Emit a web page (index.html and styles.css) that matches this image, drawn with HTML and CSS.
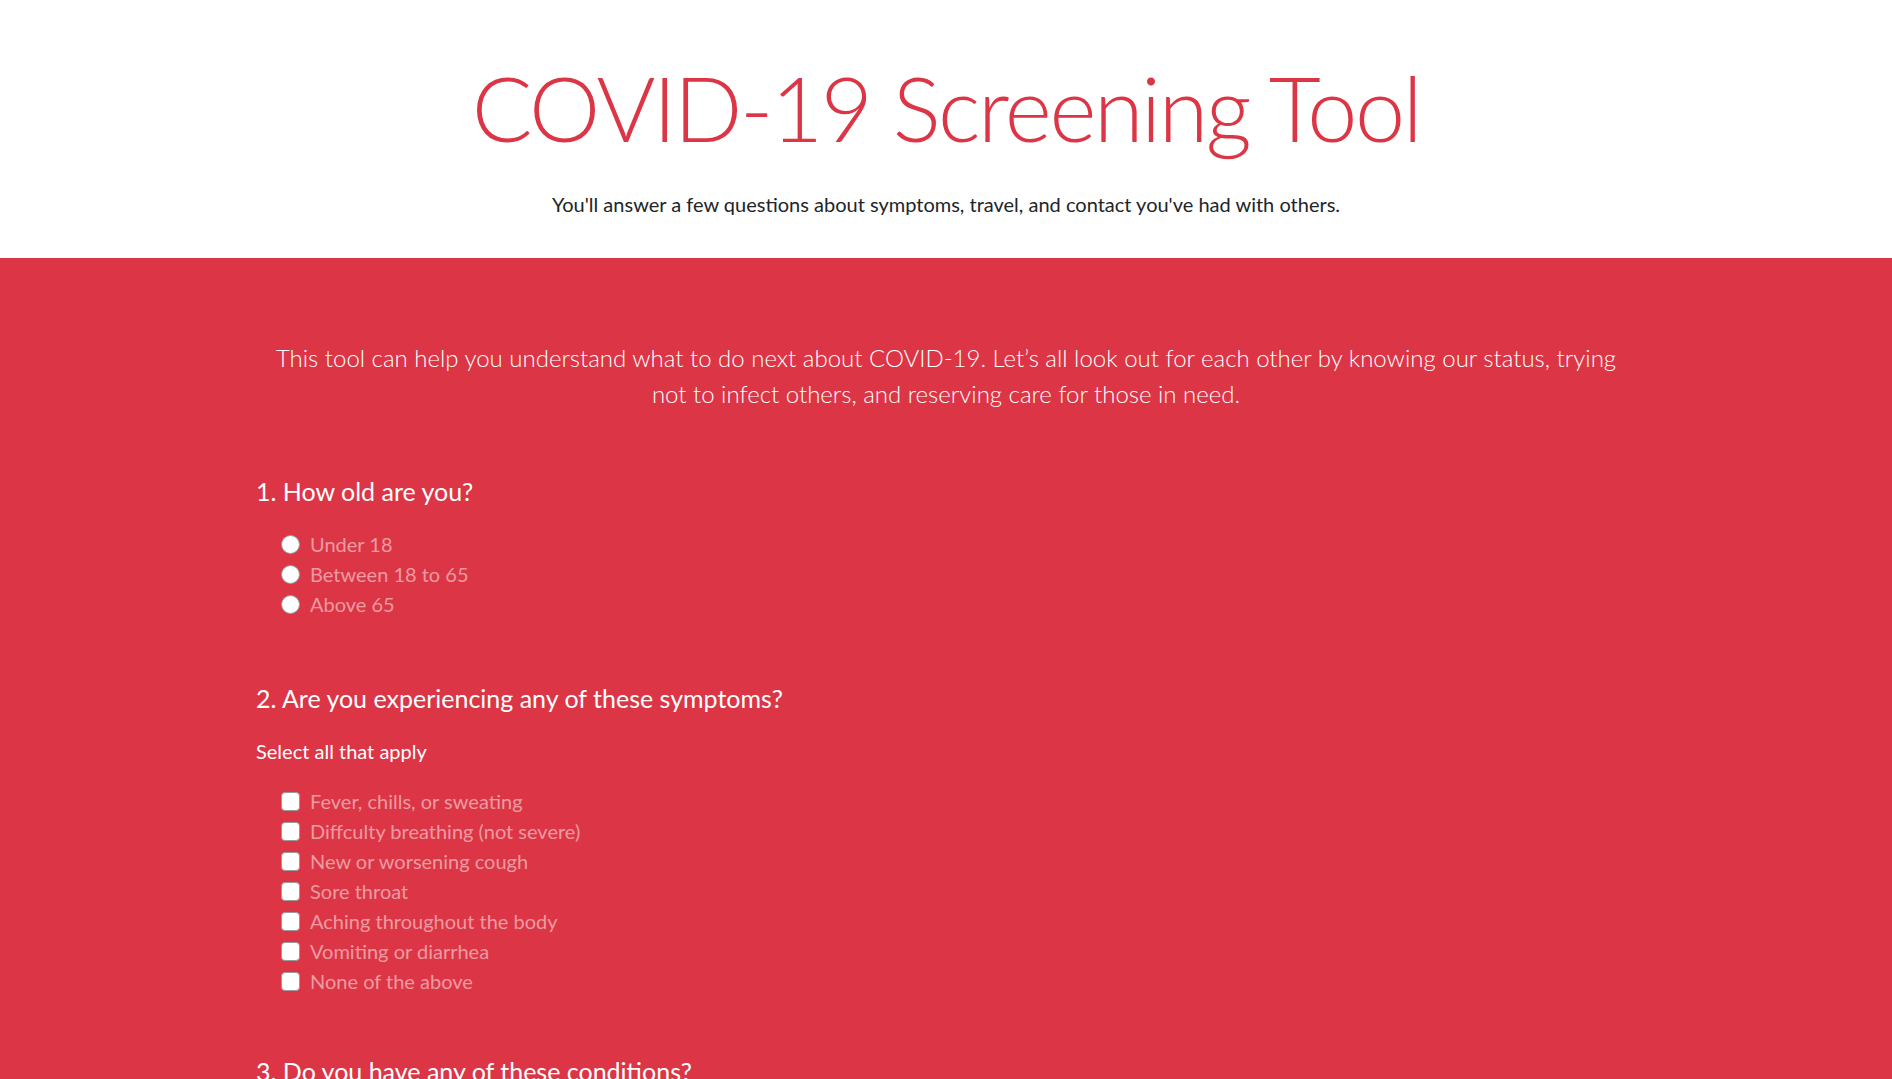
FILE: index.html
```html
<!DOCTYPE html>
<html lang="en">
<head>
<meta charset="utf-8">
<title>COVID-19 Screening Tool</title>
<link rel="stylesheet" href="styles.css">
</head>
<body>
<header class="hero">
  <h1 class="hero-title">COVID-19 Screening Tool</h1>
  <p class="hero-sub">You'll answer a few questions about symptoms, travel, and contact you've had with others.</p>
</header>
<main class="screen">
  <div class="container">
    <p class="intro">This tool can help you understand what to do next about COVID-19. Let’s all look out for each other by knowing our status, trying not to infect others, and reserving care for those in need.</p>

    <section class="question q1">
      <h2 class="q-title">1. How old are you?</h2>
      <div class="options">
        <label class="opt"><input type="radio" name="age" class="radio"><span>Under 18</span></label>
        <label class="opt"><input type="radio" name="age" class="radio"><span>Between 18 to 65</span></label>
        <label class="opt"><input type="radio" name="age" class="radio"><span>Above 65</span></label>
      </div>
    </section>

    <section class="question q2">
      <h2 class="q-title">2. Are you experiencing any of these symptoms?</h2>
      <p class="hint">Select all that apply</p>
      <div class="options">
        <label class="opt"><input type="checkbox" class="check"><span>Fever, chills, or sweating</span></label>
        <label class="opt"><input type="checkbox" class="check"><span>Diffculty breathing (not severe)</span></label>
        <label class="opt"><input type="checkbox" class="check"><span>New or worsening cough</span></label>
        <label class="opt"><input type="checkbox" class="check"><span>Sore throat</span></label>
        <label class="opt"><input type="checkbox" class="check"><span>Aching throughout the body</span></label>
        <label class="opt"><input type="checkbox" class="check"><span>Vomiting or diarrhea</span></label>
        <label class="opt"><input type="checkbox" class="check"><span>None of the above</span></label>
      </div>
    </section>

    <section class="question q3">
      <h2 class="q-title">3. Do you have any of these conditions?</h2>
    </section>
  </div>
</main>
</body>
</html>
```
FILE: styles.css
```css
html, body {
  margin: 0;
  padding: 0;
}
body {
  font-family: Lato, "Open Sans", "Liberation Sans", sans-serif;
  color: #212529;
  background: #dc3545;
  overflow: hidden;
}
.hero {
  background: #ffffff;
  height: 258px;
  box-sizing: border-box;
  padding-top: 53px;
  display: flex;
  flex-direction: column;
  align-items: center;
}
.hero-title {
  margin: 0;
  font-size: 90px;
  font-weight: 300;
  line-height: 1.2;
  letter-spacing: -2.4px;
  color: #dc3545;
}
.hero-sub {
  margin: 28px 0 0;
  font-size: 20px;
  line-height: 30px;
  color: #212529;
}
.screen {
  background: #dc3545;
  color: #ffffff;
  padding-top: 82px;
}
.container {
  max-width: 1380px;
  margin: 0 auto;
  display: flex;
  flex-direction: column;
}
.intro {
  margin: 0;
  text-align: center;
  font-size: 24px;
  font-weight: 300;
  line-height: 36px;
}
.question {
  display: flex;
  flex-direction: column;
}
.q1 { margin-top: 64px; }
.q2 { margin-top: 64px; }
.q3 { margin-top: 60px; }
.q-title {
  margin: 0;
  font-size: 25px;
  font-weight: 400;
  line-height: 30px;
}
.q1 .options { margin-top: 23px; }
.hint {
  margin: 23px 0 0;
  font-size: 20px;
  line-height: 30px;
}
.q2 .options { margin-top: 20px; }
.options {
  display: flex;
  flex-direction: column;
  padding-left: 25px;
}
.opt {
  display: flex;
  align-items: center;
  gap: 10px;
  height: 30px;
  font-size: 20px;
  color: rgba(255, 255, 255, 0.5);
}
.radio, .check {
  appearance: none;
  -webkit-appearance: none;
  margin: 0;
  width: 19px;
  height: 19px;
  background: #ffffff;
  border: 1px solid #9a9a9a;
  box-sizing: border-box;
  flex: none;
}
.radio { border-radius: 50%; }
.check { border-radius: 4px; }
```
